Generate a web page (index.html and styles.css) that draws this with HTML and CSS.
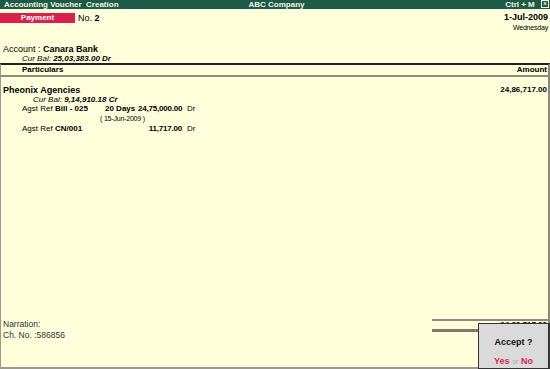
FILE: index.html
```html
<!DOCTYPE html>
<html lang="en">
<head>
  <meta charset="UTF-8" />
  <title>Accounting Voucher Creation</title>
  <link rel="stylesheet" href="styles.css">
</head>
<body>

  <div class="screen">
    <!-- Title bar -->
    <div class="titlebar">
      <span class="tb-left">Accounting Voucher &nbsp;Creation</span>
      <span class="tb-mid">ABC Company</span>
      <span class="tb-right">Ctrl + M <span class="close-box">x</span></span>
    </div>

    <!-- Voucher type + date -->
    <div class="voucher-head">
      <div class="vtype-row">
        <span class="vtype">Payment</span>
        <span class="vno">No. <b>2</b></span>
      </div>
      <div class="vdate">
        <div class="date">1-Jul-2009</div>
        <div class="day">Wednesday</div>
      </div>
    </div>

    <!-- Account -->
    <div class="account">
      <div class="acc-line">Account : <b>Canara Bank</b></div>
      <div class="curbal acc-bal"><i>Cur Bal:</i> <b><i>25,03,383.00 Dr</i></b></div>
    </div>

    <!-- Ledger -->
    <div class="ledger">
      <div class="ledger-head">
        <span class="col-part">Particulars</span>
        <span class="col-amt">Amount</span>
      </div>

      <div class="ledger-body">
        <div class="entry">
          <b class="entry-name">Pheonix Agencies</b>
          <b class="entry-amt">24,86,717.00</b>
        </div>
        <div class="curbal party-bal"><i>Cur Bal:</i> <b><i>9,14,910.18 Cr</i></b></div>

        <div class="ref-row">
          <span class="ref-lbl">Agst Ref</span>
          <b class="ref-name">Bill - 025</b>
          <b class="ref-days">20 Days</b>
          <b class="ref-amt">24,75,000.00</b>
          <span class="ref-drcr">Dr</span>
        </div>
        <div class="ref-due">( 15-Jun-2009 )</div>
        <div class="ref-row">
          <span class="ref-lbl">Agst Ref</span>
          <b class="ref-name">CN/001</b>
          <b class="ref-days"></b>
          <b class="ref-amt">11,717.00</b>
          <span class="ref-drcr">Dr</span>
        </div>
      </div>

      <div class="ledger-foot">
        <div class="narration">
          <div>Narration:</div>
          <div>Ch. No. :586856</div>
        </div>
        <div class="total">
          <div class="total-amt">24,86,717.00</div>
        </div>
      </div>
    </div>

    <!-- Accept dialog -->
    <div class="accept">
      <div class="accept-q">Accept ?</div>
      <div class="accept-opts"><span class="opt">Yes</span> <span class="or">or</span> <span class="opt">No</span></div>
    </div>
  </div>

</body>
</html>
```

FILE: styles.css
```css
body {
  margin: 0;
  font-family: 'Liberation Sans', Arial, sans-serif;
  font-size: 8px;
  color: #000;
  background: #ffffdc;
}

.screen {
  position: relative;
  width: 550px;
  height: 369px;
  overflow: hidden;
  display: flex;
  flex-direction: column;
}

.titlebar {
  height: 9px;
  line-height: 9px;
  background: #1d5a47;
  color: #f4f4e4;
  font-weight: bold;
  display: grid;
  grid-template-columns: 1fr auto 1fr;
  padding: 0 1px 0 4px;
}

.tb-right {
  text-align: right;
}

.close-box {
  display: inline-block;
  width: 6px;
  height: 6px;
  line-height: 5px;
  font-size: 6px;
  text-align: center;
  border: 1px solid #f4f4e4;
  vertical-align: top;
  margin: 0 0 0 4px;
}

.voucher-head {
  display: flex;
  justify-content: space-between;
  margin-top: 3px;
}

.vtype-row {
  display: flex;
  align-items: center;
  margin-top: 1px;
  height: 10px;
}

.vtype {
  width: 75px;
  height: 10px;
  line-height: 10px;
  background: #dc1f4e;
  color: #fff;
  font-weight: bold;
  text-align: center;
}

.vno {
  margin-left: 3px;
  font-size: 9px;
}

.vdate {
  text-align: right;
  padding-right: 2px;
}

.date {
  font-weight: bold;
  font-size: 9px;
  line-height: 10px;
}

.day {
  font-size: 7px;
  line-height: 11px;
  letter-spacing: -0.2px;
}

.account {
  margin-top: 11px;
  padding-left: 3px;
}

.acc-line {
  font-size: 9px;
  line-height: 10px;
}

.curbal {
  line-height: 9px;
  font-size: 8px;
}

.acc-bal {
  padding-left: 19px;
}

.ledger {
  flex: 1;
  display: flex;
  flex-direction: column;
  border-top: 2px solid #222;
  border-right: 2px solid #8a8a7a;
  border-bottom: 2px solid #9a9a8a;
  border-left: 1px solid #9a9a8a;
}

.ledger-head {
  display: flex;
  justify-content: space-between;
  height: 10px;
  line-height: 10px;
  font-weight: bold;
  border-bottom: 2px solid #8a8a7a;
}

.col-part {
  padding-left: 21px;
}

.col-amt {
  padding-right: 1px;
}

.ledger-body {
  padding-top: 8px;
}

.entry {
  display: flex;
  justify-content: space-between;
  line-height: 10px;
  font-size: 9px;
  padding-left: 2px;
}

.entry-amt {
  font-size: 8px;
  padding-right: 1px;
}

.party-bal {
  padding-left: 32px;
}

.ref-row {
  display: flex;
  line-height: 10px;
  padding-left: 21px;
}

.ref-lbl {
  width: 33px;
}

.ref-name {
  width: 50px;
}

.ref-days {
  width: 33px;
}

.ref-amt {
  width: 44px;
  text-align: right;
  letter-spacing: -0.2px;
}

.ref-drcr {
  margin-left: 5px;
}

.ref-due {
  font-size: 7px;
  line-height: 10px;
  padding-left: 99px;
  letter-spacing: -0.2px;
}

.ledger-foot {
  margin-top: auto;
  display: flex;
  justify-content: space-between;
  align-items: flex-end;
}

.narration {
  font-size: 8.5px;
  line-height: 11px;
  padding: 0 0 26px 2px;
  color: #333;
}

.total {
  width: 116px;
  margin-bottom: 35px;
  border-top: 2px solid #8a8a7a;
  border-bottom: 3px solid #7a7a6a;
}

.total-amt {
  text-align: right;
  font-weight: bold;
  line-height: 8px;
  padding-right: 1px;
}

.accept {
  position: absolute;
  left: 478px;
  top: 323px;
  width: 69px;
  height: 44px;
  background: #dadada;
  border: 1px solid #333;
  border-right-width: 2px;
  text-align: center;
  font-weight: bold;
}

.accept-q {
  margin-top: 13px;
  font-size: 9px;
  color: #111;
}

.accept-opts {
  margin-top: 9px;
  font-size: 9px;
}

.opt {
  color: #dc1f4e;
}

.or {
  color: #aaa;
  font-weight: normal;
  font-size: 7px;
}
```
